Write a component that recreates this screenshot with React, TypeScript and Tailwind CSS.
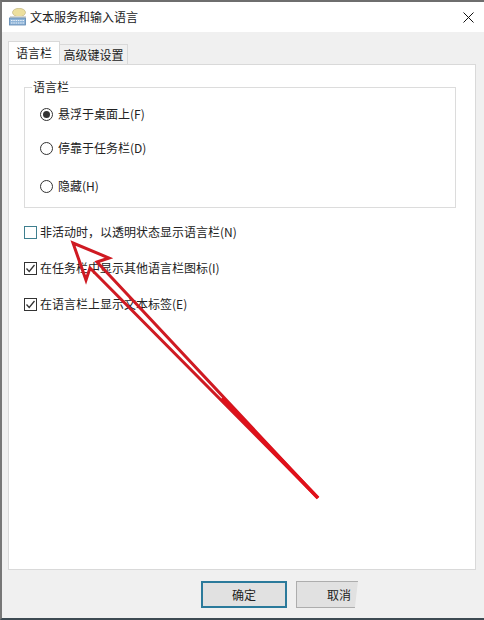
import React from "react";

const font = { fontFamily: '"Noto Sans CJK SC", "Liberation Sans", sans-serif' };

const Radio = ({ label, checked, className }: { label: string; checked?: boolean; className?: string }) => (
  <div className={`flex items-center gap-[5px] h-[16px] ${className ?? ""}`}>
    <span className="w-[13px] h-[13px] rounded-full border border-[#333333] bg-white flex items-center justify-center shrink-0">
      {checked && <span className="w-[7px] h-[7px] rounded-full bg-[#333333]" />}
    </span>
    <span>{label}</span>
  </div>
);

const Check = ({ label, checked, className }: { label: string; checked?: boolean; className?: string }) => (
  <div className={`flex items-center gap-[3px] h-[16px] ${className ?? ""}`}>
    <span className={`w-[13px] h-[13px] border bg-white shrink-0 ${checked ? "border-[#333333]" : "border-[#3f7f8f]"}`}>
      {checked && (
        <svg viewBox="0 0 11 11" className="w-[11px] h-[11px]">
          <path d="M1.5 5.5 L4.2 8.5 L9.5 2" fill="none" stroke="#333333" strokeWidth="1.3" />
        </svg>
      )}
    </span>
    <span>{label}</span>
  </div>
);

const TitleIcon = () => (
  <svg viewBox="0 0 18 18" className="w-[18px] h-[18px]">
    <ellipse cx="10" cy="4.5" rx="6.5" ry="4.2" fill="#ecdf9e" stroke="#b9ad78" strokeWidth="0.6" />
    <rect x="1" y="8" width="16" height="2" fill="#d8d8d0" />
    <rect x="0.5" y="10" width="16" height="7" fill="#8fb4d8" stroke="#5d86b0" strokeWidth="0.8" />
    <path d="M2 12.5h13M2 15h13" stroke="#e8f0f8" strokeWidth="1" strokeDasharray="1.5 0.8" />
  </svg>
);

// red annotation arrow drawn over the dialog
const Arrow = () => (
  <svg viewBox="0 0 484 620" className="absolute inset-0 w-[484px] h-[620px] pointer-events-none">
    <path
      d="M318 498 L97 262 L109 258 L73 243 L86 280 L90 268 L318 498 Z"
      fill="none"
      stroke="#cf1a22"
      strokeWidth="3"
      strokeLinejoin="miter"
    />
    <path d="M318 498 L222 398" stroke="#e0101a" strokeWidth="3.6" />
  </svg>
);

export default function App() {
  return (
    <div
      style={font}
      className="relative w-[484px] h-[620px] overflow-hidden bg-[#f0f0f0] text-[12px] leading-[16px] text-[#222222] flex flex-col border-t-[2px] border-b-[2px] border-l-[2px] border-t-[#6e6e6e] border-b-[#3d4a52] border-l-[#777777]"
    >
      {/* Title bar */}
      <div className="h-[30px] shrink-0 bg-white flex items-center pl-[7px] pr-[10px]">
        <TitleIcon />
        <span className="ml-[3px] text-[#1a1a1a]">文本服务和输入语言</span>
        <svg viewBox="0 0 11 11" className="w-[11px] h-[11px] ml-auto">
          <path d="M0.5 0.5 L10.5 10.5 M10.5 0.5 L0.5 10.5" stroke="#111111" strokeWidth="1" />
        </svg>
      </div>

      {/* Tabs */}
      <div className="flex items-end h-[32px] shrink-0 pl-[6px] relative z-10">
        <div className="w-[52px] h-[23px] bg-white border border-b-0 border-[#d9d9d9] flex items-center justify-center">语言栏</div>
        <div className="w-[68px] h-[20px] bg-[#f0f0f0] border border-l-0 border-b-0 border-[#d9d9d9] flex items-center justify-center">高级键设置</div>
      </div>

      {/* Page */}
      <div className="h-[506px] shrink-0 ml-[6px] mr-[8px] bg-white border border-[#d9d9d9] pl-[15px] pr-[19px] pt-[15px]">
        <fieldset className="h-[128px] border border-[#dcdcdc] pl-[8px] ">
          <legend className="ml-[-1px] px-[1px] leading-[14px]">语言栏</legend>
          <div className="pl-[7px] pt-[12px]">
            <Radio label="悬浮于桌面上(F)" checked />
            <Radio label="停靠于任务栏(D)" className="mt-[18px]" />
            <Radio label="隐藏(H)" className="mt-[22px]" />
          </div>
        </fieldset>
        <div className="mt-[16px]">
          <Check label="非活动时，以透明状态显示语言栏(N)" />
          <Check label="在任务栏中显示其他语言栏图标(I)" checked className="mt-[20px]" />
          <Check label="在语言栏上显示文本标签(E)" checked className="mt-[20px]" />
        </div>
      </div>

      {/* Buttons */}
      <div className="flex pl-[199px] pt-[11px] gap-[9px]">
        <button className="w-[86px] h-[27px] bg-[#e1e1e1] border-2 border-[#2b7a9b] text-center">确定</button>
        <button className="w-[62px] h-[27px] bg-[#e1e1e1] border border-r-0 border-[#adadad] text-right pr-[7px] [clip-path:polygon(0_0,100%_0,95%_100%,0_100%)]">取消</button>
      </div>

      <div className="absolute -left-[2px] -top-[2px]">
        <Arrow />
      </div>
    </div>
  );
}
